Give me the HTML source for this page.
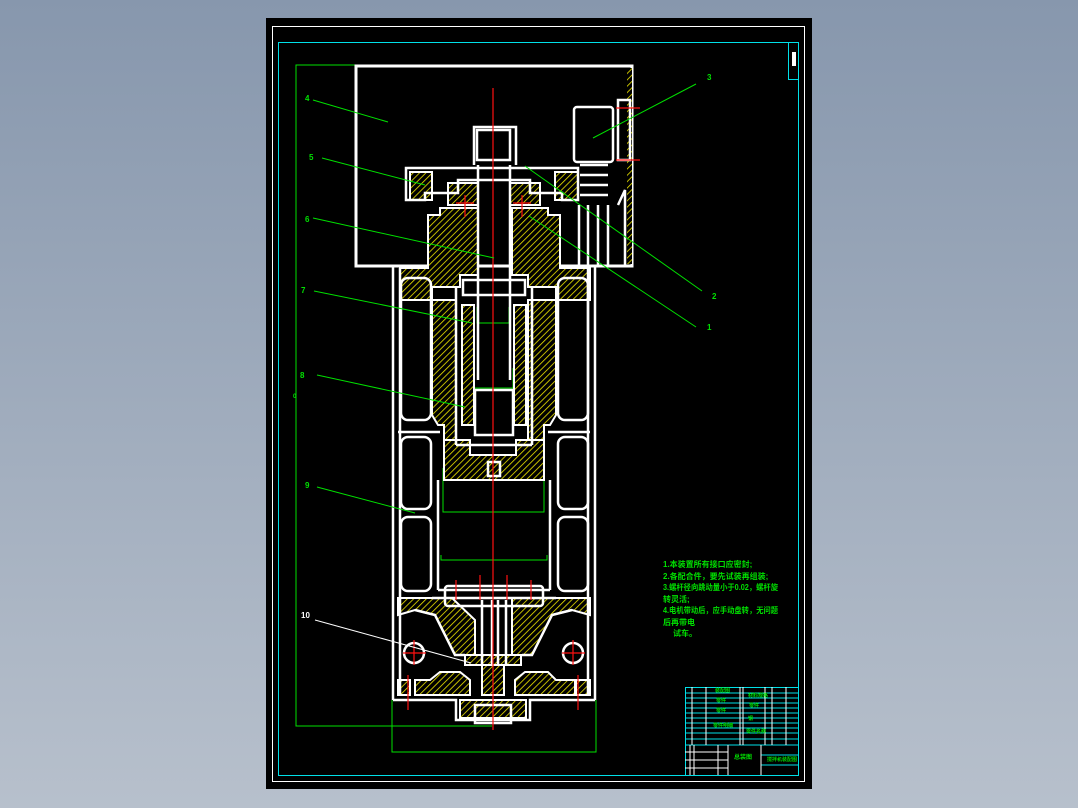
<!DOCTYPE html>
<html><head><meta charset="utf-8"><style>
html,body{margin:0;padding:0;width:1078px;height:808px;overflow:hidden;background:linear-gradient(#8797ad,#b7c0cc);}
svg{position:absolute;left:0;top:0}
text{font-family:"Liberation Sans","Noto Sans CJK SC",sans-serif;font-weight:bold}
</style></head><body>
<svg width="1078" height="808" viewBox="0 0 1078 808">
<defs>
<pattern id="h" width="4.5" height="4.5" patternUnits="userSpaceOnUse" patternTransform="rotate(45)">
<rect width="4.5" height="4.5" fill="#000"/><line x1="0" y1="0" x2="0" y2="4.5" stroke="#f0e800" stroke-width="1.6"/>
</pattern>
</defs>
<rect x="266" y="18" width="546" height="771" fill="#000"/>
<rect x="272.5" y="26.5" width="532" height="755" fill="none" stroke="#fff" stroke-width="1"/>
<rect x="278.5" y="42.5" width="520" height="733" fill="none" stroke="#00e0e8" stroke-width="1"/>
<rect x="788.5" y="42.5" width="10" height="37" fill="none" stroke="#00e0e8"/>
<rect x="792" y="52" width="4" height="14" fill="#fff"/>

<g stroke="#00e000" fill="none" stroke-width="1">
<polyline points="355,65 296,65 296,726 492,726"/>
<polyline points="392,700 392,752 596,752 596,700"/>
<polyline points="443,468 443,512 544,512 544,468"/>
<polyline points="441,555 441,560 547,560 547,555"/>
<polyline points="477,307 477,323 509,323 509,307"/>
<polyline points="473,368 473,388 513,388 513,368"/>
</g>

<rect x="356" y="66" width="276" height="200" fill="none" stroke="#fff" stroke-width="3"/>
<rect x="627" y="68" width="5" height="196" fill="url(#h)"/>

<g fill="url(#h)" stroke="#fff" stroke-width="2">
<rect x="410" y="172" width="22" height="28"/>
<rect x="555" y="172" width="23" height="28"/>
<rect x="448" y="183" width="30" height="22"/>
<rect x="510" y="183" width="30" height="22"/>
<path d="M428 215 L440 215 440 208 478 208 478 275 460 275 460 287 432 287 432 300 400 300 400 268 428 268Z"/>
<path d="M512 208 L548 208 548 215 560 215 560 268 590 268 590 300 556 300 556 287 528 287 528 275 512 275Z"/>
<path d="M432 300 L456 300 456 440 444 440 444 425 438 425 432 415Z"/>
<path d="M528 300 L556 300 556 415 550 425 544 425 544 440 528 440Z"/>
<rect x="462" y="305" width="12" height="120"/>
<rect x="514" y="305" width="12" height="120"/>
<path d="M444 440 L470 440 470 455 516 455 516 440 544 440 544 480 444 480Z"/>
<path d="M398 598 L452 598 475 620 475 655 455 655 435 615 415 610 398 615Z"/>
<path d="M512 598 L590 598 590 615 572 610 552 615 532 655 512 655Z"/>
<rect x="465" y="655" width="56" height="10"/>
<rect x="482" y="665" width="22" height="30"/>
<rect x="398" y="680" width="12" height="15"/>
<rect x="576" y="680" width="14" height="15"/>
<path d="M415 680 L430 680 440 672 460 672 470 680 470 695 415 695Z"/>
<path d="M515 680 L525 672 548 672 556 680 575 680 575 695 515 695Z"/>
<rect x="460" y="700" width="66" height="18"/>
</g>

<g fill="none" stroke="#fff" stroke-width="2.5">
<path d="M474 165 L474 127 L516 127 L516 165"/>
<rect x="477" y="130" width="33" height="30"/>
<path d="M406 200 L406 168 L578 168 L578 200 L562 200 L562 193 L530 193 L530 180 L458 180 L458 193 L425 193 L425 200Z"/>
<path d="M478 165 L478 380 M510 165 L510 380"/>
<rect x="574" y="107" width="39" height="55" rx="3"/>
<path d="M580 165 H608 M580 175 H608 M580 185 H608 M580 195 H608"/>
<path d="M579 205 V265 M588 205 V265 M598 205 V265 M608 205 V265 M618 205 L625 190 V265"/>
<rect x="618" y="100" width="12" height="60"/>
<path d="M393 267 V700 M595 267 V700"/>
<path d="M400 268 V695 M588 268 V695"/>
<rect x="401" y="278" width="30" height="142" rx="7"/>
<rect x="558" y="278" width="30" height="142" rx="7"/>
<rect x="401" y="437" width="30" height="72" rx="7"/>
<rect x="558" y="437" width="30" height="72" rx="7"/>
<rect x="401" y="517" width="30" height="74" rx="7"/>
<rect x="558" y="517" width="30" height="74" rx="7"/>
<path d="M398 432 H440 M548 432 H590"/>
<path d="M456 287 V445 M532 287 V445 M456 445 H532"/>
<rect x="463" y="280" width="62" height="15"/>
<rect x="475" y="390" width="38" height="45"/>
<path d="M438 480 V590 M550 480 V590"/>
<path d="M438 590 H550 M432 598 H556"/>
<rect x="445" y="586" width="98" height="20" rx="3"/>
<path d="M482 600 V665 M492 600 V665 M498 600 V665 M506 600 V665"/>
<path d="M393 700 H456 V720 H530 V700 H595"/>
<rect x="475" y="705" width="36" height="18"/>
<path d="M415 610 L435 615 455 655 465 655 M572 610 L552 615 532 655 522 655"/>
<rect x="488" y="462" width="12" height="14"/>
</g>
<circle cx="414" cy="653" r="10" fill="none" stroke="#fff" stroke-width="2.5"/>
<circle cx="573" cy="653" r="10" fill="none" stroke="#fff" stroke-width="2.5"/>

<g stroke="#ff1010" stroke-width="1.2">
<line x1="493" y1="88" x2="493" y2="730"/>
<line x1="414" y1="640" x2="414" y2="665"/><line x1="403" y1="653" x2="426" y2="653"/>
<line x1="573" y1="640" x2="573" y2="665"/><line x1="562" y1="653" x2="585" y2="653"/>
<line x1="408" y1="675" x2="408" y2="710"/><line x1="578" y1="675" x2="578" y2="710"/>
<line x1="456" y1="203" x2="474" y2="203"/><line x1="465" y1="195" x2="465" y2="217"/>
<line x1="513" y1="203" x2="531" y2="203"/><line x1="522" y1="195" x2="522" y2="217"/>
<line x1="616" y1="108" x2="640" y2="108"/><line x1="616" y1="160" x2="640" y2="160"/>
<line x1="456" y1="580" x2="456" y2="600"/><line x1="480" y1="575" x2="480" y2="600"/>
<line x1="507" y1="575" x2="507" y2="600"/><line x1="531" y1="580" x2="531" y2="600"/>
</g>

<g stroke="#00e000" stroke-width="1">
<line x1="313" y1="100" x2="388" y2="122"/>
<line x1="322" y1="158" x2="425" y2="185"/>
<line x1="313" y1="218" x2="494" y2="258"/>
<line x1="314" y1="291" x2="472" y2="323"/>
<line x1="317" y1="375" x2="465" y2="407"/>
<line x1="317" y1="487" x2="415" y2="513"/>
<line x1="696" y1="84" x2="593" y2="138"/>
<line x1="702" y1="291" x2="525" y2="166"/>
<line x1="696" y1="327" x2="529" y2="216"/>
</g>
<line x1="315" y1="620" x2="471" y2="663" stroke="#fff" stroke-width="1"/>
<g fill="#00e000" font-size="8">
<text x="305" y="101">4</text><text x="309" y="160">5</text><text x="305" y="222">6</text>
<text x="301" y="293">7</text><text x="300" y="378">8</text><text x="305" y="488">9</text>
<text x="707" y="80">3</text><text x="712" y="299">2</text><text x="707" y="330">1</text>
<text x="293" y="398" font-size="6">0</text>
</g>
<text x="301" y="618" fill="#fff" font-size="8">10</text>

<g fill="#00e000" font-size="8">
<text x="663" y="567">1.本装置所有接口应密封;</text>
<text x="663" y="579">2.各配合件，要先试装再组装;</text>
<text x="663" y="590" textLength="115" lengthAdjust="spacingAndGlyphs">3.螺杆径向跳动量小于0.02，螺杆旋</text>
<text x="663" y="602">转灵活;</text>
<text x="663" y="613" textLength="115" lengthAdjust="spacingAndGlyphs">4.电机带动后，应手动盘转，无问题</text>
<text x="663" y="625">后再带电</text>
<text x="673" y="636">试车。</text>
</g>

<g stroke="#00e0e8" stroke-width="1" fill="none">
<rect x="685.5" y="687.5" width="113" height="88"/>
<path d="M685 693H799M685 698H799M685 703H799M685 708H799M685 713H799M685 718H799M685 723H799M685 728H799M685 733H799M685 739H799M685 745H799M761 755H799M761 765H799"/>
</g>
<g stroke="#fff" stroke-width="1">
<path d="M692 687V745M706 687V745M740 687V745M743 687V745M765 687V745M772 687V745M786 687V745M728 745V775M761 745V775M690 745V775M694 745V775M718 745V775M685 752H728M685 760H728M685 768H728"/>
</g>
<g fill="#00e000" font-size="5">
<text x="715" y="692">装配图</text><text x="716" y="702">零件</text><text x="716" y="712">零件</text>
<text x="713" y="727">零件明细</text><text x="748" y="697">材料规格</text><text x="749" y="707">零件</text>
<text x="748" y="720">钢</text><text x="746" y="733">零件名称</text>
<text x="734" y="759" font-size="6">总装图</text><text x="767" y="761">搅拌机装配图</text>
</g>
</svg>
</body></html>
